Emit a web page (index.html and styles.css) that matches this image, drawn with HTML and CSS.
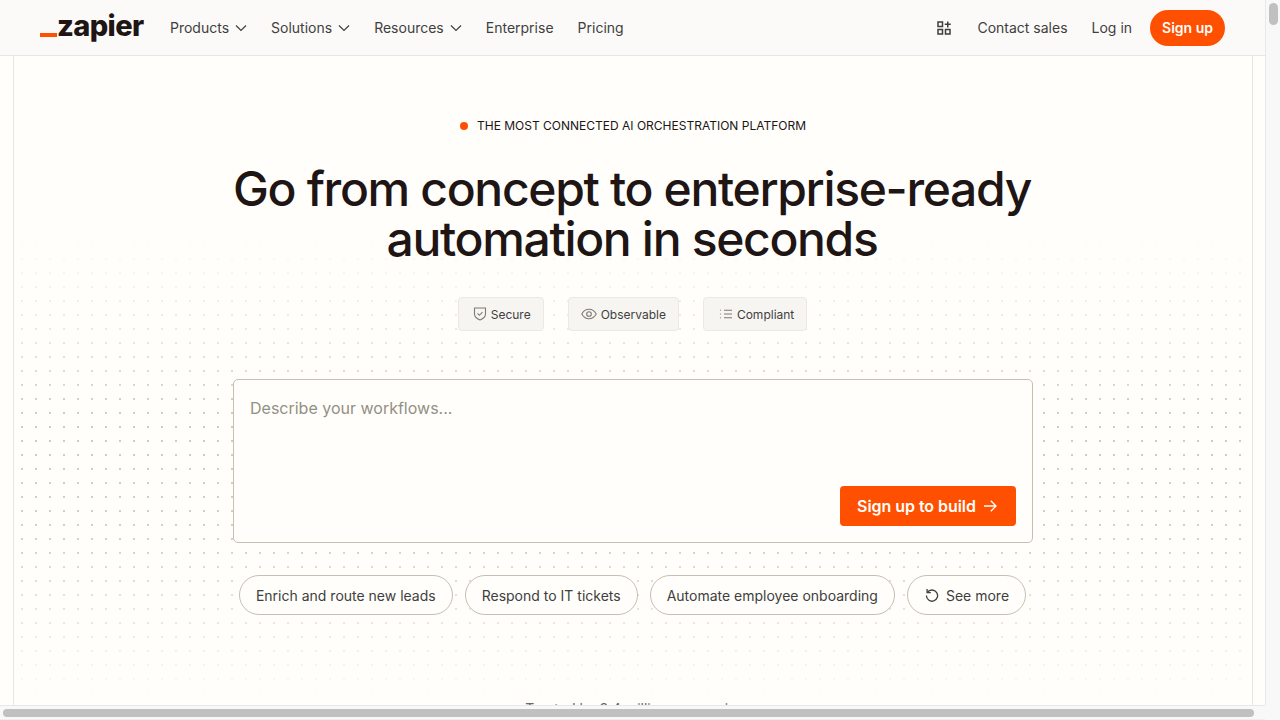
FILE: index.html
```html
<!DOCTYPE html>
<html lang="en">
<head>
<meta charset="utf-8">
<title>Zapier</title>
<link rel="stylesheet" href="styles.css">
</head>
<body>
<div class="window">
  <div class="viewport">
    <header class="topbar">
      <a class="logo"><span class="logo-bar"></span><span class="logo-word">zapier</span></a>
      <nav class="nav">
        <a class="nav-link">Products <svg class="chev" viewBox="0 0 12 12"><path d="M1 3.500l5 5 5-5"/></svg></a>
        <a class="nav-link">Solutions <svg class="chev" viewBox="0 0 12 12"><path d="M1 3.500l5 5 5-5"/></svg></a>
        <a class="nav-link">Resources <svg class="chev" viewBox="0 0 12 12"><path d="M1 3.500l5 5 5-5"/></svg></a>
        <a class="nav-link">Enterprise</a>
        <a class="nav-link">Pricing</a>
      </nav>
      <div class="actions">
        <svg class="apps" viewBox="0 0 14 14"><path d="M1 1h4.500v4.500H1zM1 8.500h4.500V13H1zM8.500 8.500H13V13H8.500zM10.750 .5v6M7.750 3.250h6"/></svg>
        <a class="nav-link">Contact sales</a>
        <a class="nav-link">Log in</a>
        <a class="signup">Sign up</a>
      </div>
    </header>
    <main class="page">
      <section class="hero">
        <p class="eyebrow"><span class="eyebrow-dot"></span>THE MOST CONNECTED AI ORCHESTRATION PLATFORM</p>
        <h1 class="title">Go from concept to enterprise-ready<br>automation in seconds</h1>
        <ul class="badges">
          <li class="badge"><svg class="badge-icon shield" viewBox="0 0 14 14"><path d="M1.500 1h11v6c0 3-2.500 4.800-5.500 6-3-1.200-5.500-3-5.500-6z"/><path d="M4.500 6.400l1.900 1.900 3.100-3.100"/></svg>Secure</li>
          <li class="badge"><svg class="badge-icon eye" viewBox="0 0 16 12"><path d="M.8 6C2.500 2.900 5 1.300 8 1.300S13.500 2.900 15.200 6C13.500 9.100 11 10.700 8 10.700S2.500 9.100 .8 6z"/><circle cx="8" cy="6" r="2.300"/></svg>Observable</li>
          <li class="badge"><svg class="badge-icon list" viewBox="0 0 13 10"><path d="M5 1.300h8M5 5h8M5 8.700h8"/><path class="list-marks" d="M1.500.6v1.400M1.500 4.300v1.400M1.500 8v1.400"/></svg>Compliant</li>
        </ul>
        <form class="prompt">
          <div class="placeholder">Describe your workflows...</div>
          <div class="prompt-foot">
            <a class="build">Sign up to build <svg class="arrow" viewBox="0 0 14 14"><path d="M1 7h12M7.800 1.800L13 7l-5.200 5.200"/></svg></a>
          </div>
        </form>
        <div class="chips">
          <a class="chip">Enrich and route new leads</a>
          <a class="chip">Respond to IT tickets</a>
          <a class="chip">Automate employee onboarding</a>
          <a class="chip"><svg class="rotate" viewBox="0 0 14 14"><path d="M2.400 4.400A5.600 5.600 0 1 1 1.400 7.500"/><path d="M2.100 .9v3.700h3.700"/></svg>See more</a>
        </div>
        <p class="trusted">Trusted by 3.4 million companies</p>
      </section>
    </main>
  </div>
  <div class="vbar"><div class="vthumb"></div></div>
  <div class="hbar"><div class="hthumb"></div></div>
  <div class="corner"></div>
</div>
</body>
</html>
```
FILE: styles.css
```css
* { box-sizing: border-box; }
html, body { margin: 0; height: 100%; overflow: hidden; }
body { font-family: Inter, "Liberation Sans", sans-serif; color: #2b2358; background: #fffefb; }
ul { list-style: none; margin: 0; padding: 0; }
p, h1 { margin: 0; }

.window {
  width: 1280px; height: 720px;
  display: grid;
  grid-template-columns: 1265px 15px;
  grid-template-rows: 705px 15px;
}
.viewport { overflow: hidden; display: flex; flex-direction: column; background: #fffefb; }

.topbar {
  flex: none; height: 56px;
  display: flex; align-items: center;
  padding: 0 40px;
  background: #fbfaf8;
  border-bottom: 1px solid #e8e6e0;
}
.logo { display: flex; align-items: flex-end; width: 104px; height: 28px; }
.logo-bar { width: 17px; height: 4px; background: #ff4f00; margin-bottom: 5px; }
.logo-word {
  font-size: 29px; font-weight: 800; line-height: 28px;
  letter-spacing: -0.6px; color: #201515;
  transform: translateY(-2px);
}
.nav { display: flex; align-items: center; gap: 24px; margin-left: 26px; }
.nav-link { display: flex; align-items: center; gap: 6px; font-size: 14px; line-height: 20px; color: #403f3e; white-space: nowrap; }
.chev { width: 12px; height: 12px; fill: none; stroke: #403f3e; stroke-width: 1.2; }
.actions { display: flex; align-items: center; gap: 24px; margin-left: auto; }
.apps { width: 14px; height: 14px; fill: none; stroke: #403f3e; stroke-width: 1.5; margin-right: 2px; }
.signup {
  display: block; height: 36px; padding: 0 12px; border-radius: 18px; margin-left: -6px;
  background: #ff4f00; color: #fffefb; font-size: 14px; font-weight: 600; line-height: 36px;
}

.page { flex: 1; min-height: 0; margin: 0 12px 0 13px; border-left: 1px solid #e8e6e0; border-right: 1px solid #e8e6e0; }
.hero {
  height: 100%;
  display: flex; flex-direction: column; align-items: center;
  padding-top: 62px;
  background-image:
    linear-gradient(to bottom, #fffefb 170px, rgba(255,254,251,.55) 280px, rgba(255,254,251,0) 360px, rgba(255,254,251,.1) 480px, rgba(255,254,251,.95) 640px),
    radial-gradient(circle at 8px 8px, #cfcbc2 1.1px, transparent 1.3px);
  background-size: 100% 100%, 14px 14px;
  background-position: 0 0, 0 -1px;
  background-repeat: no-repeat, repeat;
}
.hero > * { flex: none; }
.eyebrow { display: flex; align-items: center; gap: 9px; font-size: 12px; line-height: 16px; color: #201515; }
.eyebrow-dot { width: 8px; height: 8px; border-radius: 50%; background: #ff4f00; }
.title {
  margin-top: 30px; padding-right: 2px;
  font-size: 48px; line-height: 50px; font-weight: 500; letter-spacing: -1.33px;
  color: #201515; text-align: center;
}
.badges { display: flex; gap: 24px; margin-top: 33px; padding-right: 1px; }
.badge {
  display: flex; align-items: center; height: 34px; padding: 0 12px;
  background: #f7f5f2; border: 1px solid #ece9e3; border-radius: 4px;
  font-size: 12px; color: #403f3e; gap: 4px;
}
.badge:first-child { padding-left: 14px; }
.badge-icon { flex: none; fill: none; stroke: #7d7a72; stroke-width: 1.1; }
.shield { width: 14px; height: 14px; }
.eye { width: 16px; height: 12px; }
.list { width: 13px; height: 10px; margin-left: 3px; margin-right: 1px; }
.list-marks { stroke: #b5b1a8; }

.prompt {
  width: 800px; height: 164px; margin-top: 48px;
  display: flex; flex-direction: column; justify-content: space-between;
  padding: 16px;
  background: #fffefb; border: 1px solid #c5c0b1; border-radius: 5px;
}
.placeholder { font-size: 16px; line-height: 24px; color: #939084; }
.prompt-foot { display: flex; justify-content: flex-end; }
.build {
  display: flex; align-items: center; justify-content: center; gap: 7px;
  width: 176px; height: 40px; padding-right: 2px; border-radius: 4px;
  background: #ff4f00; color: #fffefb; font-size: 16px; font-weight: 600; letter-spacing: -.05px;
}
.arrow { width: 14px; height: 14px; fill: none; stroke: #fffefb; stroke-width: 1.3; }

.chips { display: flex; gap: 12px; margin-top: 32px; padding-right: 1px; }
.chip {
  display: flex; align-items: center; gap: 7px;
  height: 40px; padding: 0 16px; border-radius: 20px;
  border: 1px solid #c5c0b1; background: #fffefb;
  font-size: 14px; color: #403f3e; white-space: nowrap;
}
.chip:last-child { padding-left: 17px; }
.rotate { width: 14px; height: 14px; fill: none; stroke: #403f3e; stroke-width: 1.3; }
.trusted { margin-top: 84px; padding-left: 3px; font-size: 14px; line-height: 20px; color: #6b6860; white-space: nowrap; }

.vbar { background: #f8f8f9; border-left: 1px solid #e8e8e8; display: flex; justify-content: center; padding-top: 3px; }
.vthumb { width: 9px; height: 22px; border-radius: 5px; background: #c0c0c0; }
.hbar { background: #f8f8f9; border-top: 1px solid #e8e8e8; border-bottom: 1px solid #eeeeee; padding: 3px 0 0 3px; }
.hthumb { width: 1251px; height: 8px; border-radius: 4px; background: #c0c0c0; }
.corner { background: #f8f8f9; }
```
